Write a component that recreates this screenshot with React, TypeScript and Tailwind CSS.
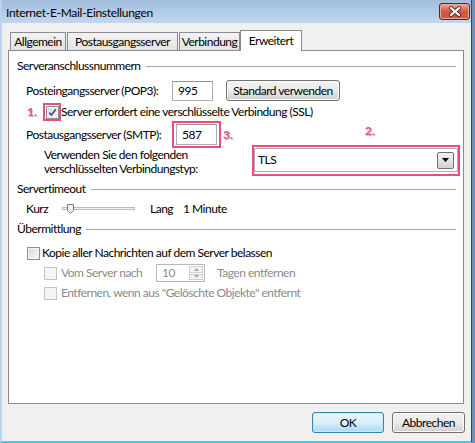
import React from "react";

const base = "font-['Lato','Noto_Sans',sans-serif] text-[12px] tracking-[-0.5px] leading-[16px]";
const pinkNum = "text-[#ea4c80] font-bold tracking-normal [text-shadow:1px_1px_0_#c4c4c4]";

function CheckBox({ checked, disabled }: { checked?: boolean; disabled?: boolean }) {
  return (
    <span
      className={
        disabled
          ? "w-[13px] h-[13px] shrink-0 border border-[#c4c4c4] bg-[#f4f4f4]"
          : "w-[13px] h-[13px] shrink-0 border border-[#8e8f8f] bg-gradient-to-br from-[#d6d7d9] to-[#fbfbfb] shadow-[inset_0_0_0_1px_#f3f3f3] flex items-center justify-center"
      }
    >
      {checked && (
        <svg width="11" height="11" viewBox="0 0 11 11">
          <path d="M2.3 5.6 L4.5 8 L8.8 2.2" fill="none" stroke="#3c4f96" strokeWidth="1.7" />
        </svg>
      )}
    </span>
  );
}

function GroupHeader({ title }: { title: string }) {
  return (
    <div className="flex items-center h-4 pl-2 pr-[7px]">
      <span>{title}</span>
      <div className="flex-1 h-px bg-[#a9a9a9] ml-[5px]" />
    </div>
  );
}

function CloseButton() {
  return (
    <div className="mt-[3px] mr-[1px] w-[31px] h-[17px] rounded-[3px] border border-[#5e231c] bg-gradient-to-b from-[#e8ab9e] via-[#d2573f] to-[#c95a44] shadow-[inset_0_0_0_1px_#eea595] flex items-center justify-center">
      <svg width="14" height="11" viewBox="0 0 14 11">
        <path d="M3 2 L11 9 M11 2 L3 9" stroke="#5a2a24" strokeWidth="4" strokeLinecap="round" />
        <path d="M3 2 L11 9 M11 2 L3 9" stroke="#ffffff" strokeWidth="2.2" strokeLinecap="round" />
      </svg>
    </div>
  );
}

function Tab({ label, w, selected }: { label: string; w: string; selected?: boolean }) {
  return (
    <div
      className={
        selected
          ? `${w} h-[21px] -mb-px relative z-10 bg-white border border-b-0 border-[#898c95] flex items-center justify-center pb-[1px]`
          : `${w} h-[18px] bg-gradient-to-b from-[#f3f3f3] to-[#e2e2e2] border border-b-0 border-[#898c95] flex items-center justify-center`
      }
    >
      {label}
    </div>
  );
}

function Slider() {
  return (
    <svg width="74" height="16" viewBox="0 0 74 16" className="shrink-0">
      <rect x="0.5" y="6.5" width="72" height="2" fill="#eef0f0" stroke="#bdbdbd" strokeWidth="1" />
      <path d="M5.5 3.5 H11.5 V9.5 L8.5 12.5 L5.5 9.5 Z" fill="#f2f2f2" stroke="#7a7a7a" />
    </svg>
  );
}

function WinButton({ label, w, primary }: { label: string; w: string; primary?: boolean }) {
  return (
    <div
      className={
        primary
          ? `${w} h-[21px] rounded-[3px] border border-[#3c7fb1] bg-gradient-to-b from-[#eaf6fd] via-[#d9f0fc] to-[#a7d9f5] shadow-[inset_0_0_0_1px_#c9ebfb] flex items-center justify-center`
          : `${w} h-[21px] rounded-[3px] border border-[#707070] bg-gradient-to-b from-[#f2f2f2] via-[#ebebeb] to-[#cfcfcf] shadow-[inset_0_0_0_1px_#fbfbfb] flex items-center justify-center`
      }
    >
      {label}
    </div>
  );
}

export default function App() {
  return (
    <div className={`w-[475px] h-[443px] flex bg-[#6e92b8] text-black ${base}`}>
      <div className="w-[472px] h-full flex flex-col bg-[#f0f0f0] border-l-2 border-l-[#bdd3ea] border-r border-r-[#33465c] border-b-2 border-b-[#3fcaee]">
        {/* title bar */}
        <div className="h-[23px] shrink-0 flex items-start justify-between bg-gradient-to-b from-[#a2bedd] to-[#c2d7ee]">
          <span className="pl-1 pt-[6px] leading-[14px] tracking-[-0.3px]">Internet-E-Mail-Einstellungen</span>
          <CloseButton />
        </div>

        {/* tabs */}
        <div className="mt-[7px] ml-[8px] h-[20px] flex items-end">
          <Tab label="Allgemein" w="w-[56px]" />
          <div className="ml-[1px]">
            <Tab label="Postausgangsserver" w="w-[111px]" />
          </div>
          <div className="ml-[1px]">
            <Tab label="Verbindung" w="w-[61px]" />
          </div>
          <Tab label="Erweitert" w="w-[62px]" selected />
        </div>

        {/* panel */}
        <div className="ml-[6px] w-[456px] h-[354px] shrink-0 border border-[#898c95] bg-white flex flex-col">
          <div className="mt-[7px]">
            <GroupHeader title="Serveranschlussnummern" />
          </div>

          <div className="mt-[6px] h-[21px] pl-[17px] flex items-center">
            <span className="w-[146px] shrink-0">Posteingangsserver (POP3):</span>
            <div className="w-[41px] h-[20px] border border-[#abadb3] border-t-[#8f929a] pl-[5px] flex items-center">995</div>
            <div className="ml-[13px]">
              <WinButton label="Standard verwenden" w="w-[114px]" />
            </div>
          </div>

          <div className="mt-[2px] h-[18px] pl-[18px] flex items-center">
            <span className={`w-[16px] shrink-0 ${pinkNum}`}>1.</span>
            <div className="w-[18px] h-[18px] border-2 border-[#ea4c80] flex items-center justify-center shrink-0">
              <CheckBox checked />
            </div>
            <span>Server erfordert eine verschlüsselte Verbindung (SSL)</span>
          </div>

          <div className="h-[27px] pl-[17px] flex items-center">
            <span className="w-[146px] shrink-0">Postausgangsserver (SMTP):</span>
            <div className="w-[49px] h-[27px] border-2 border-[#ea4c80] flex items-center pl-[2px] shrink-0">
              <div className="w-[41px] h-[21px] border border-[#abadb3] border-t-[#8f929a] pl-[5px] flex items-center">587</div>
            </div>
            <span className={`ml-[2px] w-[12px] shrink-0 ${pinkNum}`}>3.</span>
            <span className={`ml-[130px] self-start mt-[2px] ${pinkNum}`}>2.</span>
          </div>

          <div className="mt-px h-[28px] pl-[35px] flex items-start">
            <div className="w-[208px] shrink-0 -mt-px leading-[14px]">
              <div>Verwenden Sie den folgenden</div>
              <div>verschlüsselten Verbindungstyp:</div>
            </div>
            <div className="-mt-[4px] w-[208px] h-[31px] shrink-0 border-2 border-[#ea4c80] pt-[1px]">
              <div className="h-[24px] border border-[#abadb3] bg-white flex items-center justify-between pl-[3px] pr-[3px]">
                <span>TLS</span>
                <div className="w-[17px] h-[17px] rounded-[2px] border border-[#707070] bg-gradient-to-b from-[#f2f2f2] to-[#d4d4d4] flex items-center justify-center">
                  <svg width="7" height="4" viewBox="0 0 7 4">
                    <path d="M0 0 H7 L3.5 4 Z" fill="#000" />
                  </svg>
                </div>
              </div>
            </div>
          </div>

          <div className="mt-[4px]">
            <GroupHeader title="Servertimeout" />
          </div>

          <div className="mt-[4px] h-4 pl-[17px] flex items-center">
            <span className="w-[36px] shrink-0">Kurz</span>
            <Slider />
            <span className="ml-[14px] w-[33px] shrink-0">Lang</span>
            <span>1 Minute</span>
          </div>

          <div className="mt-[4px]">
            <GroupHeader title="Übermittlung" />
          </div>

          <div className="mt-[8px] h-4 pl-[18px] flex items-center">
            <CheckBox />
            <span className="ml-[2px]">Kopie aller Nachrichten auf dem Server belassen</span>
          </div>

          <div className="mt-[3px] h-[18px] pl-[35px] flex items-center text-[#8a8a8a]">
            <CheckBox disabled />
            <span className="ml-[4px] w-[95px] shrink-0">Vom Server nach</span>
            <div className="w-[49px] h-[18px] border border-[#b9b9b9] flex items-center justify-between pl-[5px] pr-px shrink-0">
              <span>10</span>
              <div className="w-[14px] h-[14px] flex flex-col gap-px">
                <div className="flex-1 border border-[#cfcfcf] bg-[#f4f4f4] flex items-center justify-center">
                  <svg width="5" height="3" viewBox="0 0 5 3">
                    <path d="M0 3 H5 L2.5 0 Z" fill="#a8a8a8" />
                  </svg>
                </div>
                <div className="flex-1 border border-[#cfcfcf] bg-[#f4f4f4] flex items-center justify-center">
                  <svg width="5" height="3" viewBox="0 0 5 3">
                    <path d="M0 0 H5 L2.5 3 Z" fill="#a8a8a8" />
                  </svg>
                </div>
              </div>
            </div>
            <span className="ml-[12px]">Tagen entfernen</span>
          </div>

          <div className="mt-[3px] h-4 pl-[35px] flex items-center text-[#8a8a8a]">
            <CheckBox disabled />
            <span className="ml-[4px]">Entfernen, wenn aus "Gelöschte Objekte" entfernt</span>
          </div>
        </div>

        {/* buttons */}
        <div className="mt-[8px] mr-[6px] flex justify-end gap-[8px]">
          <WinButton label="OK" w="w-[72px]" primary />
          <WinButton label="Abbrechen" w="w-[73px]" />
        </div>
      </div>
    </div>
  );
}
